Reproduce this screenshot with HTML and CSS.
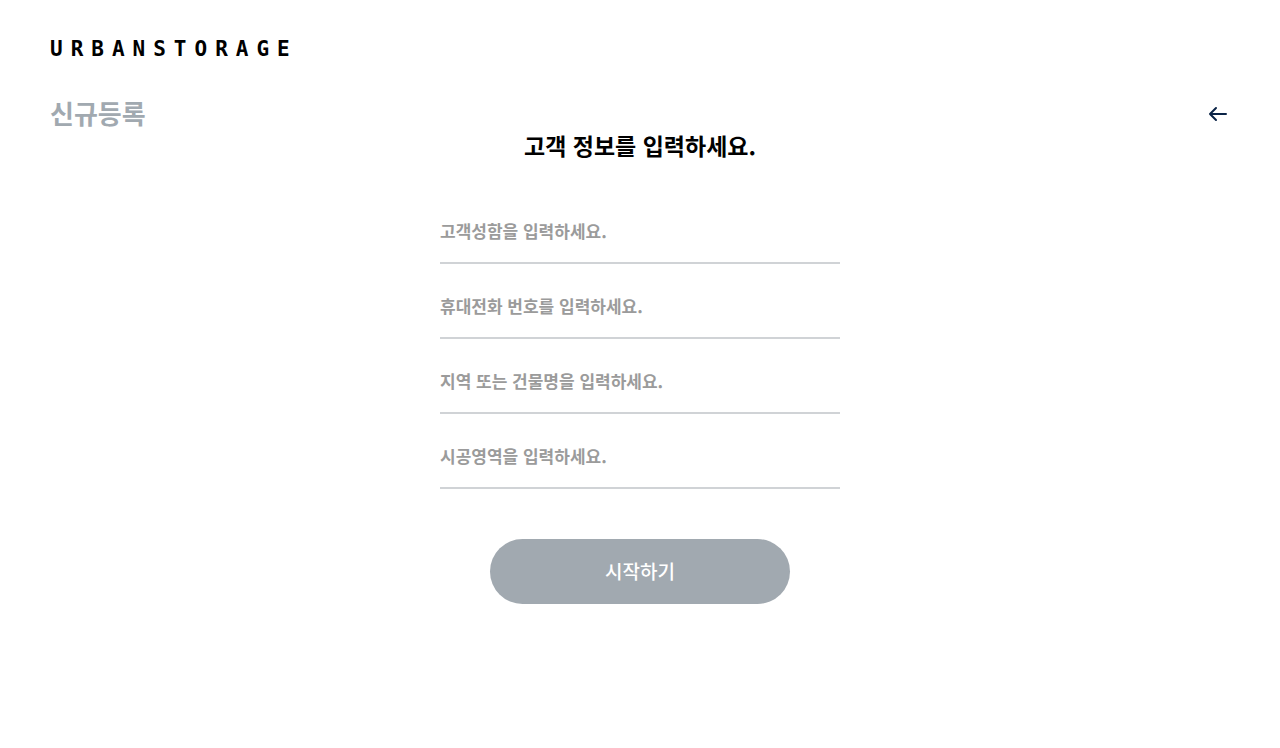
FILE: index.html
```html
<!DOCTYPE html>
<html lang="ko">
<head>
<meta charset="utf-8">
<meta name="viewport" content="width=device-width, initial-scale=1">
<title>URBANSTORAGE - 신규등록</title>
<link rel="stylesheet" href="styles.css">
</head>
<body>
<header class="header">
  <a class="logo" href="#">URBANSTORAGE</a>
  <div class="page-bar">
    <h1 class="page-title">신규등록</h1>
    <button class="back" type="button" aria-label="뒤로">
      <svg class="back-icon" viewBox="0 0 20 16" aria-hidden="true"><path d="M18 8H2M8 2L2 8l6 6"/></svg>
    </button>
  </div>
</header>
<main class="main">
  <h2 class="form-title">고객 정보를 입력하세요.</h2>
  <form class="form">
    <input class="field" type="text" aria-label="고객성함" placeholder="고객성함을 입력하세요.">
    <input class="field" type="tel" aria-label="휴대전화 번호" placeholder="휴대전화 번호를 입력하세요.">
    <input class="field" type="text" aria-label="지역 또는 건물명" placeholder="지역 또는 건물명을 입력하세요.">
    <input class="field" type="text" aria-label="시공영역" placeholder="시공영역을 입력하세요.">
    <button class="submit" type="submit">시작하기</button>
  </form>
</main>
</body>
</html>
```
FILE: styles.css
```css
* {
  box-sizing: border-box;
}

body {
  margin: 0;
  background: #fff;
  color: #000;
  font-family: "Noto Sans CJK KR", sans-serif;
}

.header {
  padding: 37px 50px 0;
}

.logo {
  display: block;
  width: fit-content;
  color: #000;
  font-family: "DejaVu Sans Mono", monospace;
  font-size: 21px;
  font-weight: 700;
  line-height: 24px;
  letter-spacing: 8px;
  text-decoration: none;
}

.page-bar {
  display: flex;
  align-items: center;
  justify-content: space-between;
  margin-top: 33px;
}

.page-title {
  margin: 0;
  color: #a1a9b0;
  font-size: 26px;
  font-weight: 700;
  line-height: 38px;
}

.back {
  display: flex;
  padding: 3px 2px 1px;
  border: 0;
  background: none;
  cursor: pointer;
}

.back-icon {
  width: 20px;
  height: 16px;
  fill: none;
  stroke: #0a2346;
  stroke-width: 2;
  stroke-linecap: round;
  stroke-linejoin: round;
}

.main {
  max-width: 400px;
  margin: 0 auto;
}

.form-title {
  margin: 0;
  font-size: 23px;
  font-weight: 700;
  line-height: 26px;
  text-align: center;
}

.form {
  display: flex;
  flex-direction: column;
  gap: 10px;
  padding-top: 41px;
}

.field {
  width: 100%;
  height: 65px;
  padding: 0;
  border: 0;
  border-bottom: 2px solid #d0d3d6;
  border-radius: 0;
  outline: 0;
  background: none;
  color: #000;
  font: 700 17px "Noto Sans CJK KR", sans-serif;
}

.field::placeholder {
  color: #9b9b9b;
  opacity: 1;
}

.submit {
  align-self: center;
  width: 300px;
  max-width: 100%;
  height: 65px;
  margin-top: 40px;
  padding: 0 0 2px;
  border: 0;
  border-radius: 33px;
  background: #a1a9b0;
  color: #fff;
  font: 500 19px "Noto Sans CJK KR", sans-serif;
  cursor: pointer;
}
```
